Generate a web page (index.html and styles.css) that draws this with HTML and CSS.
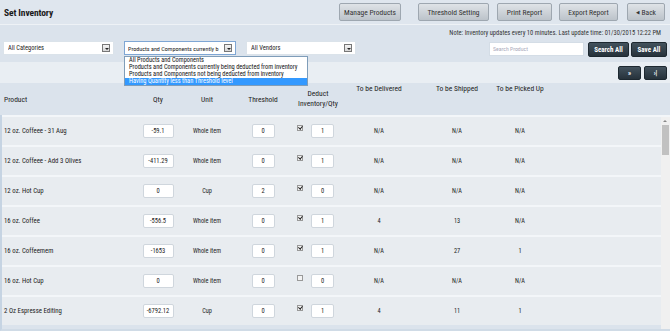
FILE: index.html
```html
<!DOCTYPE html>
<html>
<head>
<meta charset="utf-8">
<link rel="stylesheet" href="styles.css">
</head>
<body>
<div class="page">
  <div class="topbar">
    <div class="title">Set Inventory</div>
    <div class="actions">
      <button class="btn btn-manage">Manage Products</button>
      <button class="btn btn-threshold">Threshold Setting</button>
      <button class="btn btn-print">Print Report</button>
      <button class="btn btn-export">Export Report</button>
      <button class="btn btn-back"><span class="back-arrow">&#9664;</span>Back</button>
    </div>
  </div>
  <div class="note">Note: Inventory updates every 10 minutes. Last update time: 01/30/2015 12:22 PM</div>
  <div class="filters">
    <div class="select sel-cat"><span>All Categories</span><i class="caret"></i></div>
    <div class="select sel-prod focused"><span>Products and Components currently b</span><i class="caret"></i>
      <ul class="dropdown">
        <li>All Products and Components</li>
        <li>Products and Components currently being deducted from inventory</li>
        <li>Products and Components not being deducted from inventory</li>
        <li class="active">Having Quantity less than Threshold level</li>
      </ul>
    </div>
    <div class="select sel-vendor"><span>All Vendors</span><i class="caret"></i></div>
    <div class="spacer"></div>
    <div class="search">Search Product</div>
    <button class="dbtn dbtn-search">Search All</button>
    <button class="dbtn dbtn-save">Save All</button>
  </div>
  <div class="pager">
    <button class="dbtn pbtn">&raquo;</button>
    <button class="dbtn pbtn">&rsaquo;|</button>
  </div>
  <div class="thead">
    <div class="c1 hl">Product</div>
    <div class="c2 hc">Qty</div>
    <div class="c3 hc">Unit</div>
    <div class="c4 hc">Threshold</div>
    <div class="c5 hc two">Deduct<br>Inventory/Qty</div>
    <div class="c6 hc top">To be Delivered</div>
    <div class="c7 hc top">To be Shipped</div>
    <div class="c8 hc top">To be Picked Up</div>
  </div>
  <div class="tbody">
    <div class="rows">
      <div class="row"><div class="c1">12 oz. Coffeee - 31 Aug</div><div class="c2"><span class="inp w30">-59.1</span></div><div class="c3">Whole item</div><div class="c4"><span class="inp w22">0</span></div><div class="c5"><span class="chk on"></span><span class="inp w22">1</span></div><div class="c6">N/A</div><div class="c7">N/A</div><div class="c8">N/A</div></div>
      <div class="row"><div class="c1">12 oz. Coffeee - Add 3 Olives</div><div class="c2"><span class="inp w30">-411.29</span></div><div class="c3">Whole item</div><div class="c4"><span class="inp w22">0</span></div><div class="c5"><span class="chk on"></span><span class="inp w22">1</span></div><div class="c6">N/A</div><div class="c7">N/A</div><div class="c8">N/A</div></div>
      <div class="row"><div class="c1">12 oz. Hot Cup</div><div class="c2"><span class="inp w30">0</span></div><div class="c3">Cup</div><div class="c4"><span class="inp w22">2</span></div><div class="c5"><span class="chk on"></span><span class="inp w22">0</span></div><div class="c6">N/A</div><div class="c7">N/A</div><div class="c8">N/A</div></div>
      <div class="row"><div class="c1">16 oz. Coffee</div><div class="c2"><span class="inp w30">-556.5</span></div><div class="c3">Whole item</div><div class="c4"><span class="inp w22">0</span></div><div class="c5"><span class="chk on"></span><span class="inp w22">1</span></div><div class="c6">4</div><div class="c7">13</div><div class="c8">N/A</div></div>
      <div class="row"><div class="c1">16 oz. Coffeemem</div><div class="c2"><span class="inp w30">-1653</span></div><div class="c3">Whole item</div><div class="c4"><span class="inp w22">0</span></div><div class="c5"><span class="chk on"></span><span class="inp w22">1</span></div><div class="c6">N/A</div><div class="c7">27</div><div class="c8">1</div></div>
      <div class="row"><div class="c1">16 oz. Hot Cup</div><div class="c2"><span class="inp w30">0</span></div><div class="c3">Whole item</div><div class="c4"><span class="inp w22">0</span></div><div class="c5"><span class="chk"></span><span class="inp w22">0</span></div><div class="c6">N/A</div><div class="c7">N/A</div><div class="c8">N/A</div></div>
      <div class="row"><div class="c1">2 Oz Espresse Editing</div><div class="c2"><span class="inp w30">-6792.12</span></div><div class="c3">Cup</div><div class="c4"><span class="inp w22">0</span></div><div class="c5"><span class="chk on"></span><span class="inp w22">1</span></div><div class="c6">4</div><div class="c7">11</div><div class="c8">1</div></div>
    </div>
    <div class="scrollbar"><div class="arrow"></div><div class="thumb"></div></div>
  </div>
</div>
</body>
</html>
```

FILE: styles.css
```css
* { box-sizing: border-box; }
html, body { margin: 0; padding: 0; }
body {
  width: 670px;
  height: 331px;
  overflow: hidden;
  background: #dbe3ec;
  font-family: "Roboto Condensed", "Liberation Sans Narrow", "DejaVu Sans Condensed", Roboto, sans-serif;
  font-stretch: condensed;
  color: #222;
  font-size: 7px;
}
.page { width: 670px; height: 331px; display: flex; flex-direction: column; }

.topbar {
  height: 25px;
  display: flex;
  align-items: center;
  justify-content: space-between;
  padding: 0 5px 0 4px;
  border-bottom: 1px solid #eef2f6;
  background: #dfe6ee;
}
.title { font-size: 9.5px; font-weight: bold; color: #1a1a1a; letter-spacing: -0.1px; }
.actions { display: flex; align-items: center; }
.btn {
  height: 18px;
  padding: 0;
  font-family: inherit;
  font-stretch: condensed;
  font-size: 7.5px;
  color: #333;
  border: 1px solid #9ea7b0;
  border-radius: 2px;
  background: linear-gradient(#dfe3e7, #bcc3ca);
}
.btn-manage { width: 62px; }
.btn-threshold { width: 71px; margin-left: 17px; }
.btn-print { width: 55px; margin-left: 8px; }
.btn-export { width: 59px; margin-left: 7px; }
.btn-back { width: 38px; margin-left: 9px; }
.back-arrow { font-size: 5px; margin-right: 2px; vertical-align: 1px; }

.note {
  height: 16px;
  text-align: right;
  padding: 4px 9px 0 0;
  font-size: 6.5px;
  color: #333;
}

.filters {
  height: 20px;
  display: flex;
  align-items: flex-start;
  padding: 0 3px;
}
.select {
  position: relative;
  height: 14px;
  background: #fff;
  border: 1px solid #dbe3ea;
  display: flex;
  align-items: center;
  padding: 0 3px 0 4px;
  font-size: 6.5px;
  color: #222;
}
.select span { flex: 1; white-space: nowrap; overflow: hidden; }
.select.focused { border: 1px solid #7ea6d4; padding-left: 3px; }
.sel-prod span { font-size: 6.1px; }
.sel-cat { width: 111px; }
.sel-prod { width: 112px; margin-left: 10px; }
.sel-vendor { width: 110px; margin-left: 10px; }
.caret {
  width: 8px; height: 8px;
  border: 1px solid #777;
  background: linear-gradient(#f4f4f4, #d6d6d6);
  position: relative;
  flex: none;
}
.caret::after {
  content: "";
  position: absolute;
  left: 1.5px; top: 2.5px;
  border-left: 2px solid transparent;
  border-right: 2px solid transparent;
  border-top: 2px solid #222;
}
.dropdown {
  position: absolute;
  left: -1px; top: 14px;
  width: 184px;
  margin: 0; padding: 0;
  list-style: none;
  background: #fff;
  border: 1px solid #7f9db9;
  z-index: 5;
  font-size: 6.4px;
}
.dropdown li { height: 7px; line-height: 7px; padding-left: 4px; white-space: nowrap; color: #111; }
.dropdown li.active { background: #3399ff; color: #fff; }
.spacer { flex: 1; }
.search {
  width: 95px; height: 14px; margin-top: 1px;
  background: #fff;
  border: 1px solid #d4dde6;
  color: #aab;
  font-size: 5.8px;
  padding: 3px 0 0 3px;
}
.dbtn {
  font-family: inherit;
  font-stretch: condensed;
  height: 15px;
  padding: 0;
  border: 1px solid #1d2830;
  border-radius: 2px;
  background: linear-gradient(#43525d, #26323b);
  color: #fff;
  font-weight: bold;
  font-size: 7px;
}
.dbtn-search { width: 41px; margin-left: 4px; margin-top: 1px; }
.dbtn-save { width: 36px; margin-left: 2px; margin-top: 1px; }

.pager {
  height: 21px;
  background: #e9eef3;
  display: flex;
  justify-content: flex-end;
  align-items: center;
  padding-right: 3px;
  gap: 3px;
  margin-top: 1px;
}
.pbtn { width: 23px; height: 14px; font-size: 7px; }

.thead {
  height: 32px;
  display: flex;
  padding-left: 2px;
  font-size: 7.5px;
  color: #222;
}
.thead > div { display: flex; align-items: center; }
.hl { padding-left: 2px; }
.hc { justify-content: center; text-align: center; }
.two { line-height: 10px; padding-bottom: 1px; }
.top { align-items: flex-start !important; padding-top: 1px; }

.c1 { width: 130px; }
.c2 { width: 52px; }
.c3 { width: 46px; }
.c4 { width: 66px; }
.c5 { width: 44px; }
.c6 { width: 78px; }
.c7 { width: 78px; }
.c8 { width: 48px; }

.tbody {
  flex: 1;
  display: flex;
  border-left: 2px solid #c6d4e3;
  border-bottom: 2px solid #d0dbe6;
  min-height: 0;
  overflow: hidden;
}
.rows { flex: 1; display: flex; flex-direction: column; }
.row {
  height: 30px;
  flex: none;
  display: flex;
  align-items: center;
  background: #e8ecf0;
  border-top: 2px solid #f3f6f9;
  font-size: 6.3px;
  color: #222;
}
.row > div { display: flex; align-items: center; justify-content: center; }
.row > .c1 { justify-content: flex-start; padding-left: 2px; font-size: 6.8px; }
.row > .c5 { justify-content: flex-start; padding-left: 1px; }
.inp {
  display: inline-flex;
  align-items: center;
  justify-content: center;
  height: 14px;
  background: #fff;
  border: 1px solid #cfd6dd;
  border-radius: 2px;
  font-size: 6.5px;
}
.w30 { width: 31px; }
.w22 { width: 23px; }
.chk {
  width: 6px; height: 6px;
  border: 1px solid #999;
  background: #f2f2f2;
  margin-right: 8px;
  margin-top: -6px;
  position: relative;
}
.chk.on::after {
  content: "";
  position: absolute;
  left: 1px; top: -1px;
  width: 1.5px; height: 3px;
  border-right: 1.2px solid #222;
  border-bottom: 1.2px solid #222;
  transform: rotate(40deg);
}
.scrollbar {
  width: 9px;
  background: #f0f0f0;
  border-top: 2px solid #f3f6f9;
  display: flex;
  flex-direction: column;
}
.arrow { height: 8px; position: relative; }
.arrow::after {
  content: "";
  position: absolute; left: 2px; top: 3px;
  border-left: 2.5px solid transparent;
  border-right: 2.5px solid transparent;
  border-bottom: 2.5px solid #888;
}
.thumb { height: 30px; margin: 0 1px; background: #c1c1c1; }
```
